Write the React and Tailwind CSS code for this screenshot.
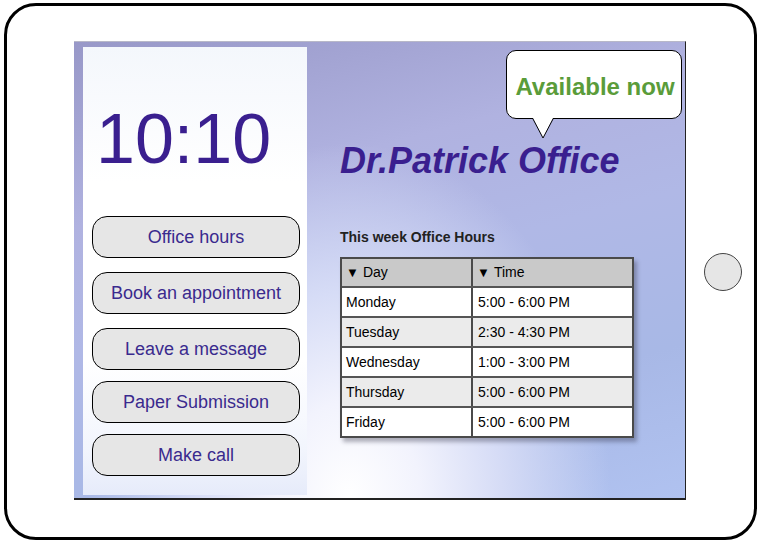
import React from 'react';

const BUTTONS = [
  { label: 'Office hours', cls: 'mt-0' },
  { label: 'Book an appointment', cls: 'mt-[14px]' },
  { label: 'Leave a message', cls: 'mt-[14px]' },
  { label: 'Paper Submission', cls: 'mt-[11px]' },
  { label: 'Make call', cls: 'mt-[11px]' },
];

const HOURS = [
  { day: 'Monday', time: '5:00 - 6:00 PM' },
  { day: 'Tuesday', time: '2:30 - 4:30 PM' },
  { day: 'Wednesday', time: '1:00 - 3:00 PM' },
  { day: 'Thursday', time: '5:00 - 6:00 PM' },
  { day: 'Friday', time: '5:00 - 6:00 PM' },
];

const App = () => {
  return (
    <div className="w-[766px] h-[543px] bg-white pt-[3px] pl-[4px] font-['Liberation_Sans',Arial,sans-serif]">
      {/* Tablet frame */}
      <div className="w-[753px] h-[537px] border-[3px] border-black rounded-[32px] flex items-start">

        {/* Screen */}
        <div className="relative ml-[67px] mt-[35px] w-[612px] h-[459px] flex border-t border-t-[#b8b8c8] border-r border-r-[#222] border-b-2 border-b-[#222] bg-[radial-gradient(ellipse_at_45%_100%,#ffffff_0%,#f2f3fd_15%,#d6dcf6_32%,transparent_55%),linear-gradient(165deg,#9898c8_0%,#b0b2e0_30%,#b0b8e6_50%,#a8b8e6_75%,#b0c2f0_100%)]">

          {/* Left panel */}
          <div className="ml-[9px] mt-[5px] w-[224px] h-[448px] flex flex-col bg-[linear-gradient(180deg,#f4f7fc_0%,#ffffff_30%,#ffffff_70%,#f2f5fd_90%,#e6ebfa_100%)]">
            <div className="mt-[57px] ml-[13px] text-[70px] leading-none text-[#3a1f8f]">10:10</div>

            <div className="mt-[42px] ml-[9px] flex flex-col">
              {BUTTONS.map((b) => (
                <div
                  key={b.label}
                  className={`${b.cls} w-[208px] h-[42px] rounded-[15px] border border-black bg-[#e6e6e6] flex items-center justify-center text-[18px] text-[#3a2a8e]`}
                >
                  {b.label}
                </div>
              ))}
            </div>
          </div>

          {/* Right column */}
          <div className="ml-[33px] flex flex-col">
            <h1 className="mt-[101px] text-[36px] leading-none font-bold italic text-[#3a1f8f]">Dr.Patrick Office</h1>

            <p className="mt-[50px] text-[14px] leading-[16px] font-bold text-[#222]">This week Office Hours</p>

            {/* Hours table */}
            <div className="mt-[12px] w-[294px] border-2 border-[#4a4a4a] shadow-[3px_4px_4px_rgba(40,40,60,0.35)] text-[14px] text-black">
              <div className="grid grid-cols-[131px_1fr] h-[27px] bg-[#c9c9c9]">
                <div className="flex items-center pl-[4px] border-r-2 border-[#4a4a4a]">
                  <span className="text-[13px] mr-[4px]">▼</span>Day
                </div>
                <div className="flex items-center pl-[4px]">
                  <span className="text-[13px] mr-[4px]">▼</span>Time
                </div>
              </div>
              {HOURS.map((h, i) => (
                <div
                  key={h.day}
                  className={`grid grid-cols-[131px_1fr] h-[30px] border-t-2 border-[#555] ${i % 2 === 1 ? 'bg-[#ebebeb]' : 'bg-white'}`}
                >
                  <div className="flex items-center pl-[4px] border-r-2 border-[#4a4a4a]">{h.day}</div>
                  <div className="flex items-center pl-[5px]">{h.time}</div>
                </div>
              ))}
            </div>
          </div>

          {/* Speech bubble */}
          <div className="absolute left-[432px] top-[8px] w-[176px] h-[69px] bg-white border border-black rounded-[10px] flex items-center justify-center pt-[4px] pl-[2px]">
            <span className="text-[24px] font-bold text-[#5a9c3a]">Available now</span>
            <svg className="absolute left-[25px] top-[67px]" width="22" height="22" viewBox="0 0 22 22">
              <polygon points="1,0 21,0 11,20" fill="#ffffff" />
              <polyline points="1,1 11,20 21,1" fill="none" stroke="#000" strokeWidth="1" />
            </svg>
          </div>
        </div>

        {/* Home button */}
        <div className="self-center ml-[18px] w-[38px] h-[38px] rounded-full border border-[#444] bg-[#e6e6e6]" />
      </div>
    </div>
  );
};

export default App;
